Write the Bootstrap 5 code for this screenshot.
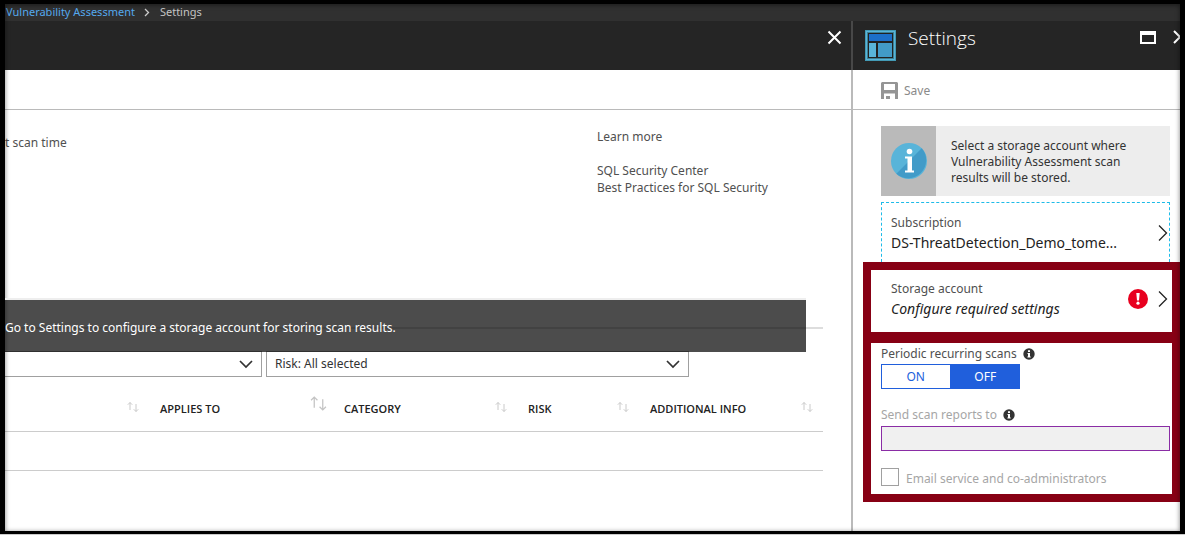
<!DOCTYPE html>
<html lang="en">
<head>
<meta charset="utf-8">
<meta name="viewport" content="width=device-width, initial-scale=1">
<title>Vulnerability Assessment - Settings</title>
<link href="https://cdn.jsdelivr.net/npm/bootstrap@5.3.0/dist/css/bootstrap.min.css" rel="stylesheet">
<style>
  body { font-family: "Noto Sans", "Open Sans", sans-serif; font-size: 12px; line-height: 16px; color: #505050; background: #ccc; }
  svg { display: block; flex-shrink: 0; }
  .portal { min-height: calc(100vh - 1px); border: solid #000; border-width: 4px 5px 3px; background: #fff; }
  .portal::after { content: ""; position: absolute; inset: 0; box-shadow: inset 0 1px 5px rgba(0,0,0,.5); pointer-events: none; }
  .crumbs { height: 17px; padding-left: 1px; background: #303030; font-size: 11px; color: #c4c4c4; }
  .crumbs a { color: #55a9ee; }
  .crumbs .breadcrumb-item + .breadcrumb-item::before { content: none; }
  .crumb-arrow { margin: 0 2px 0 9px; }
  .blade-head { height: 49px; background: #252525; color: #fff; }
  .blade-head button, .toolbar button, .picker { background: none; border: 0; padding: 0; color: inherit; }
  .blade-head h1 { font-family: "Open Sans", sans-serif; font-size: 19px; line-height: 26px; font-weight: 300; }
  .main-head { padding: 5px 9px; }
  .toolbar { height: 40px; border-bottom: 1px solid #bababa; }
  .toolbar button { color: #8a8a8a; }
  .side { width: 329px; }
  .side .blade-head { border-left: 2px solid #484848; }
  .side .toolbar, .side-body { border-left: 2px solid #bababa; }
  .side .toolbar { padding: 2px 0 0 28px; }
  .save-icon { margin-right: 6px; }
  .overview { height: 188px; }
  .scan-time { padding-top: 25px; }
  .links { width: 254px; line-height: 17px; padding-top: 18px; }
  .links a { color: #505050; }
  .links-title { margin-bottom: 17px; }
  .results { padding-right: 28px; border-top: 2px solid transparent; }
  .notice { top: -2px; left: 0; right: 45px; height: 54px; padding-top: 4px; background: rgba(0,0,0,.7); border-top: 2px solid #eee; color: #fff; background-clip: padding-box; z-index: 2; }
  .rule-line { height: 2px; background: #ddd; margin: 27px 0 22px; }
  .filter { height: 26px; border: 1px solid #a0a0a0; border-radius: 0; font-size: 12px; line-height: 16px; padding: 0 30px 0 8px; color: #333;
    background: #fff url("data:image/svg+xml,%3Csvg xmlns='http://www.w3.org/2000/svg' viewBox='0 0 14 14'%3E%3Cpath d='M1 4l6 6 6-6' fill='none' stroke='%23333' stroke-width='1.7'/%3E%3C/svg%3E") no-repeat right 8px center / 14px; }
  .filter-main { flex: 0 0 257px; border-left: 0; }
  .filter-risk { flex: 0 0 423px; }
  .grid-table { table-layout: fixed; margin: 0; --bs-table-bg: transparent; }
  .grid-table th { height: 54px; padding: 10px 10px 0 11px; font-family: "Open Sans", sans-serif; font-size: 11px; font-weight: 600; color: #222; vertical-align: middle; border-bottom: 1px solid #ccc; }
  .grid-table td { height: 39px; padding: 0; border-bottom: 1px solid #ccc; }
  .grid-table .tight { padding-right: 6px; }
  .w-wide { width: 184px; } .w-slim { width: 122px; }
  .sorter { margin-bottom: 4px; }
  .sorter-big { margin-bottom: 10px; }
  .side-body { padding: 16px 0 0; }
  .info-box { margin: 0 10px 6px 28px; background: #ededed; color: #333; }
  .info-mark { width: 55px; background: #bababa; }
  .info-text { padding: 12px 15px 10px; }
  .picker { text-align: left; display: flex; align-items: center; width: 100%; }
  .picker-name { line-height: 18px; padding-top: 2px; }
  .picker-value { font-size: 14px; line-height: 22px; color: #222; }
  .subscription { margin: 0 10px 0 28px; height: 60px; border: 1px dashed #1ebbe8; border-bottom: 0; padding: 0 1px 0 9px; }
  .subscription .picker { height: 59px; }
  .callout { margin-left: 10px; padding: 8px; background: #870014; gap: 11px; }
  .callout-part { background: #fff; }
  .storage { height: 62px; padding: 0 4px 0 20px; }
  .storage .picker { height: 57px; }
  .scan-form { padding: 3px 2px 7px 10px; }
  .field-name { margin-bottom: 2px; }
  .field-next { margin: 18px 0 3px; }
  .tip-icon { margin-left: 6px; }
  .switcher { width: 139px; }
  .switcher .btn { flex: 1 1 0; height: 25px; padding: 0; border-radius: 0; font-size: 12px; line-height: 16px; border: 1px solid #205fdc; color: #205fdc; display: flex; align-items: center; justify-content: center; transition: none; }
  .switcher .btn-check:checked + .btn { background: #205fdc; border-color: #205fdc; color: #fff; }
  .dimmed { color: #a6a6a6; }
  .mail { height: 25px; border: 1px solid #8a2da5; border-radius: 0; padding: 0 8px; font-size: 12px; transition: none; }
  .mail:disabled { background: #f0f0f0; border-color: #8a2da5; }
  .tick { width: 18px; height: 18px; border: 1px solid #a0a0a0; margin: 0; appearance: none; background: #fff; }
  .tick-name { margin-left: 7px; padding-top: 4px; }
</style>
</head>
<body>
<div class="portal position-relative d-flex flex-column overflow-hidden">
  <nav class="crumbs" aria-label="breadcrumb">
    <ol class="breadcrumb m-0 align-items-center">
      <li class="breadcrumb-item d-flex align-items-center"><a class="text-decoration-none" href="#">Vulnerability Assessment</a>
        <svg class="crumb-arrow" width="6" height="9" viewBox="0 0 6 9"><path d="M1 1l3.500 3.500L1 8" fill="none" stroke="#ccc" stroke-width="1.300"/></svg></li>
      <li class="breadcrumb-item" aria-current="page">Settings</li>
    </ol>
  </nav>
  <div class="d-flex flex-grow-1">
    <main class="flex-grow-1 overflow-hidden">
      <div class="blade-head main-head d-flex justify-content-end align-items-start">
        <button class="pt-1" type="button" aria-label="Close"><svg width="15" height="15" viewBox="0 0 15 15"><path d="M1.500 1.500l12 12M13.500 1.500l-12 12" fill="none" stroke="#fff" stroke-width="2"/></svg></button>
      </div>
      <div class="toolbar"></div>
      <div class="overview d-flex justify-content-between">
        <div class="scan-time">t scan time</div>
        <div class="links flex-shrink-0">
          <div class="links-title">Learn more</div>
          <a class="d-block text-decoration-none" href="#">SQL Security Center</a>
          <a class="d-block text-decoration-none" href="#">Best Practices for SQL Security</a>
        </div>
      </div>
      <section class="results position-relative">
        <div class="notice position-absolute d-flex align-items-center" role="status">Go to Settings to configure a storage account for storing scan results.</div>
        <div class="rule-line"></div>
        <div class="d-flex gap-1">
          <select class="form-select filter filter-main" aria-label="Status"><option></option></select>
          <select class="form-select filter filter-risk" aria-label="Risk"><option>Risk: All selected</option></select>
        </div>
        <table class="table grid-table">
          <colgroup><col><col class="w-wide"><col class="w-wide"><col class="w-slim"><col class="w-wide"></colgroup>
          <thead><tr>
            <th scope="col"><div class="d-flex justify-content-end"><svg class="sorter" width="12" height="12" viewBox="0 0 16 14"><use href="#sort"/></svg></div></th>
            <th scope="col" class="tight"><div class="d-flex justify-content-between align-items-center">APPLIES TO<svg class="sorter-big" width="17" height="15" viewBox="0 0 16 14"><use href="#sort"/></svg></div></th>
            <th scope="col"><div class="d-flex justify-content-between align-items-center">CATEGORY<svg class="sorter" width="12" height="12" viewBox="0 0 16 14"><use href="#sort"/></svg></div></th>
            <th scope="col"><div class="d-flex justify-content-between align-items-center">RISK<svg class="sorter" width="12" height="12" viewBox="0 0 16 14"><use href="#sort"/></svg></div></th>
            <th scope="col"><div class="d-flex justify-content-between align-items-center">ADDITIONAL INFO<svg class="sorter" width="12" height="12" viewBox="0 0 16 14"><use href="#sort"/></svg></div></th>
          </tr></thead>
          <tbody><tr><td colspan="5"></td></tr></tbody>
        </table>
      </section>
    </main>
    <aside class="side flex-shrink-0 d-flex flex-column">
      <div class="blade-head d-flex align-items-start overflow-hidden">
        <svg class="ms-2 mt-2 me-2" width="39" height="33" viewBox="-4 -1 39 33"><path d="M0 0h31v31H0z" fill="#439ab5"/><path d="M1 1h29v29H1z" fill="#59b4d9"/><path d="M2 2h27v27H2z" fill="#3c8094"/><path d="M3 3h25v25H3z" fill="#222"/><path d="M4 4h23v7H4z" fill="#1c6fc9"/><path d="M4 13h7v14H4z" fill="#59b4d9"/><path d="M13 13h14v14H13z" fill="#429bc8"/></svg>
        <h1 class="m-0 pt-1 flex-grow-1">Settings</h1>
        <button class="mt-2" type="button" aria-label="Maximize"><svg width="16" height="15" viewBox="0 -2 16 15"><path d="M0 0h16v13H0zM2 4v7h12V4z" fill="#fff" fill-rule="evenodd"/></svg></button>
        <button class="ms-3 mt-2" type="button" aria-label="Close settings"><svg width="8" height="16" viewBox="0 -2 8 16"><path d="M2 0l6 6-6 6" fill="none" stroke="#fff" stroke-width="2"/></svg></button>
      </div>
      <div class="toolbar d-flex align-items-center">
        <button class="d-flex align-items-center" type="button"><svg class="save-icon" width="17" height="17" viewBox="0 0 17 17"><path d="M1 0h15l1 1v16h-3v-5.500H3V17H0V1zM3 2v6h11V2z" fill="#959595" fill-rule="evenodd"/><path d="M5 14h4v3H5z" fill="#959595"/></svg>Save</button>
      </div>
      <div class="side-body flex-grow-1">
        <div class="info-box d-flex">
          <div class="info-mark d-flex align-items-center justify-content-center flex-shrink-0">
            <svg width="36" height="36" viewBox="0 0 36 36"><circle cx="18" cy="18" r="18" fill="#59b4d9"/><path d="M30.700 5.300A18 18 0 0 1 5.300 30.700z" fill="#429bc8"/><circle cx="18.500" cy="8.500" r="2.800" fill="#fff"/><path d="M14 13.500H21V27.500h2v2h-9v-2h2.500V15.500H14z" fill="#fff"/></svg>
          </div>
          <div class="info-text">Select a storage account where Vulnerability Assessment scan results will be stored.</div>
        </div>
        <div class="subscription">
          <button class="picker" type="button">
            <span class="flex-grow-1"><span class="picker-name d-block">Subscription</span><span class="picker-value d-block">DS-ThreatDetection_Demo_tome...</span></span>
            <svg width="10" height="16" viewBox="0 0 10 16"><path d="M1 .5l7.500 7.500L1 15.500" fill="none" stroke="#222" stroke-width="1.300"/></svg>
          </button>
        </div>
        <div class="callout d-flex flex-column">
          <div class="callout-part storage">
            <button class="picker" type="button">
              <span class="flex-grow-1"><span class="picker-name d-block">Storage account</span><span class="picker-value d-block fst-italic">Configure required settings</span></span>
              <svg class="me-2" width="20" height="20" viewBox="0 0 20 20"><circle cx="10" cy="10" r="10" fill="#e8001f"/><path d="M8.300 4h3.400l-.7 7.500H9z" fill="#fff"/><circle cx="10" cy="14.200" r="1.600" fill="#fff"/></svg>
              <svg width="12" height="16" viewBox="-2 0 12 16"><path d="M1 .5l7.500 7.500L1 15.500" fill="none" stroke="#222" stroke-width="1.300"/></svg>
            </button>
          </div>
          <form class="callout-part scan-form">
            <div class="field-name d-flex align-items-center" id="scans">Periodic recurring scans<svg class="tip-icon" width="12" height="12" viewBox="0 0 12 12"><use href="#tip"/></svg></div>
            <div class="switcher d-flex" role="radiogroup" aria-labelledby="scans">
              <input class="btn-check" type="radio" name="scan" id="on"><label class="btn" for="on">ON</label>
              <input class="btn-check" type="radio" name="scan" id="off" checked><label class="btn" for="off">OFF</label>
            </div>
            <label class="dimmed field-next d-flex align-items-center" for="mail">Send scan reports to<svg class="tip-icon" width="12" height="12" viewBox="0 0 12 12"><use href="#tip"/></svg></label>
            <input class="form-control mail" type="text" id="mail" disabled>
            <div class="d-flex align-items-center mt-3 dimmed">
              <input class="tick" type="checkbox" id="admins" disabled><label class="tick-name" for="admins">Email service and co-administrators</label>
            </div>
          </form>
        </div>
      </div>
    </aside>
  </div>
</div>
<svg width="0" height="0" class="position-absolute" aria-hidden="true">
  <defs>
    <g id="sort" fill="none" stroke="#c4c4c4" stroke-width="1.200"><path d="M4 11V1M1 4l3-3 3 3M12 3v10M9 10l3 3 3-3"/></g>
    <g id="tip"><circle cx="6" cy="6" r="5.700" fill="#333"/><path d="M5 2.200h2V4H5zM4.500 5H7v3.500h.7v1H4.400v-1H5V6h-.5z" fill="#fff"/></g>
  </defs>
</svg>
<script src="https://cdn.jsdelivr.net/npm/bootstrap@5.3.0/dist/js/bootstrap.bundle.min.js"></script>
</body>
</html>
